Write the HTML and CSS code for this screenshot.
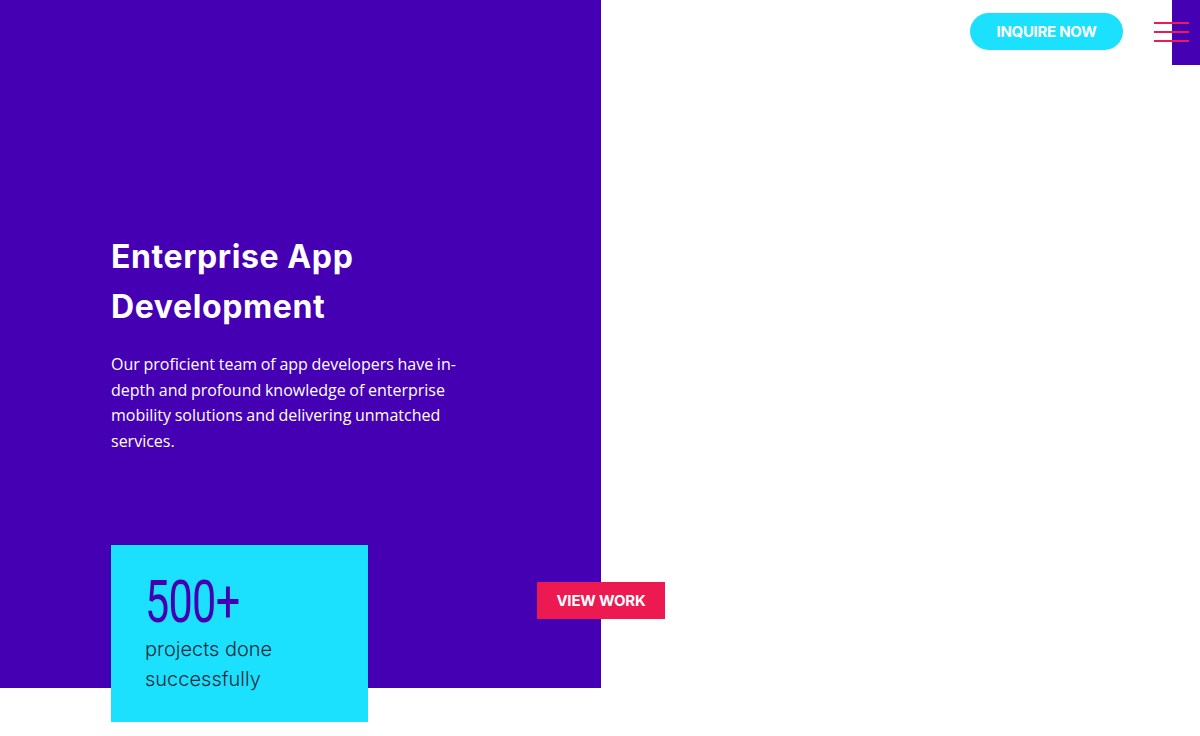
FILE: index.html
```html
<!DOCTYPE html>
<html>
<head>
<meta charset="utf-8">
<link rel="stylesheet" href="styles.css">
</head>
<body>
<div class="page">
  <section class="hero">
    <div class="hero-text">
      <h1 class="title">Enterprise App<br>Development</h1>
      <p class="lead">Our proficient team of app developers have in-depth and profound knowledge of enterprise mobility solutions and delivering unmatched services.</p>
    </div>
    <div class="hero-bottom">
      <div class="stat">
        <div class="stat-num">500+</div>
        <div class="stat-label">projects done<br>successfully</div>
      </div>
      <a class="view-work">VIEW WORK</a>
    </div>
  </section>
  <header class="topbar">
    <a class="inquire">INQUIRE NOW</a>
    <div class="menu">
      <span class="menu-tab"></span>
      <span class="bar"></span>
      <span class="bar"></span>
      <span class="bar"></span>
    </div>
  </header>
</div>
</body>
</html>
```
FILE: styles.css
```css
html, body { margin: 0; padding: 0; background: #fff; }
body { font-family: "Open Sans", "Liberation Sans", sans-serif; width: 1200px; height: 736px; overflow: hidden; }
.page { display: flex; align-items: flex-start; width: 1200px; height: 736px; }
.hero {
  width: 601px; height: 688px; flex: none;
  background: #4600b4;
  box-sizing: border-box;
  padding: 232px 0 0 111px;
  display: flex; flex-direction: column;
}
.title {
  margin: 0;
  font-family: Inter, "Noto Sans", sans-serif;
  font-weight: 700;
  font-size: 32px;
  line-height: 50px;
  color: #fff;
  letter-spacing: 0.6px;
}
.lead {
  margin: 20px 0 0;
  width: 356px;
  font-size: 16px;
  line-height: 25.7px;
  color: #fff;
  word-spacing: -0.5px;
}
.hero-bottom {
  margin-top: auto;
  display: flex; align-items: flex-start;
  margin-bottom: -34px;
}
.stat {
  flex: none;
  width: 257px; height: 177px; box-sizing: border-box;
  background: #1be1ff;
  padding: 28px 0 0 34px;
}
.stat-num {
  font-family: Roboto, "DejaVu Sans", sans-serif;
  font-weight: 400;
  font-size: 60px;
  line-height: 58px;
  color: #4600b4;
  letter-spacing: -1px;
  display: inline-block;
  transform: scaleX(0.72);
  transform-origin: left center;
}
.stat-label {
  font-family: Inter, "Noto Sans", sans-serif;
  font-weight: 300;
  font-size: 20px;
  line-height: 30px;
  color: #1e2a3a;
  margin-top: 3px;
}
.view-work {
  margin: 37px 0 0 169px;
  width: 128px; height: 37px;
  background: #ed1a52;
  color: #fff;
  font-family: Inter, sans-serif;
  font-weight: 700;
  font-size: 15px;
  display: flex; align-items: center; justify-content: center;
  flex: none;
  letter-spacing: -0.2px;
}
.topbar {
  flex: 1;
  display: flex; justify-content: flex-end; align-items: flex-start;
  padding-top: 13px;
}
.inquire {
  width: 153px; height: 37px;
  border-radius: 19px;
  background: #1be1ff;
  color: #fff;
  font-family: Inter, sans-serif;
  font-weight: 700;
  font-size: 15px;
  display: flex; align-items: center; justify-content: center;
  letter-spacing: -0.3px;
}
.menu {
  position: relative;
  width: 46px;
  margin-left: 31px;
  margin-top: -13px;
  height: 65px;
  display: flex; flex-direction: column; align-items: flex-start;
  padding-top: 22px; box-sizing: border-box; gap: 7.5px;
}
.menu-tab {
  position: absolute; right: 0; top: 0;
  width: 28px; height: 65px; background: #4600b4;
}
.bar {
  position: relative;
  display: block; width: 35px; height: 1.5px;
  background: #ee1a55;
}
```
